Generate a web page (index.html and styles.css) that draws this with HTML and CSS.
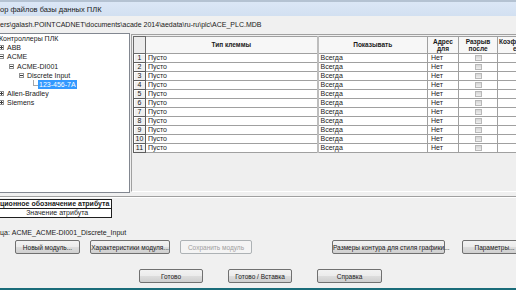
FILE: index.html
```html
<!DOCTYPE html>
<html>
<head>
    <link rel="stylesheet" href="styles.css">
</head>
<body>
    <div class="window">
        <div class="titlebar"><span class="title">ор файлов базы данных ПЛК</span></div>
        <div class="path">ers\galash.POINTCADNET\documents\acade 2014\aedata\ru-ru\plc\ACE_PLC.MDB</div>

        <div class="main">
            <div class="tree">
                <div class="node root">Контроллеры ПЛК</div>
                <div class="node lvl1"><i class="exp plus"></i>ABB</div>
                <div class="node lvl1"><i class="exp minus"></i>ACME</div>
                <div class="node lvl2"><i class="exp minus"></i>ACME-DI001</div>
                <div class="node lvl3"><i class="exp minus"></i>Discrete Input</div>
                <div class="node lvl4"><i class="leaf"></i><span class="selected">123-456-7A</span></div>
                <div class="node lvl1"><i class="exp plus"></i>Allen-Bradley</div>
                <div class="node lvl1"><i class="exp plus"></i>Siemens</div>
            </div>

            <div class="grid">
                <table class="cells">
                    <colgroup>
                        <col class="c-num">
                        <col class="c-type">
                        <col class="c-show">
                        <col class="c-addr">
                        <col class="c-break">
                        <col class="c-coef">
                    </colgroup>
                    <thead>
                        <tr>
                            <th class="corner"></th>
                            <th>Тип клеммы</th>
                            <th class="show">Показывать</th>
                            <th>Адрес<br>для</th>
                            <th>Разрыв<br>после</th>
                            <th class="coef">Коэф<br><span class="coef-2">е</span></th>
                        </tr>
                    </thead>
                    <tbody id="rows"></tbody>
                </table>
            </div>
        </div>

        <div class="sep"></div>

        <table class="attr">
            <tr><th>ционное обозначение атрибута</th></tr>
            <tr><td>Значение атрибута</td></tr>
        </table>

        <div class="unit">ца: ACME_ACME-DI001_Discrete_Input</div>

        <div class="buttons">
            <button class="btn w65">Новый модуль...</button>
            <button class="btn w79">Характеристики модуля...</button>
            <button class="btn w72" disabled>Сохранить модуль</button>
            <button class="btn w112 far">Размеры контура для стиля графики...</button>
            <button class="btn w65 near">Параметры...</button>
        </div>

        <div class="buttons bottom">
            <button class="btn w64">Готово</button>
            <button class="btn w64">Готово / Вставка</button>
            <button class="btn w65">Справка</button>
        </div>

        <div class="taskbar"></div>
    </div>

    <script>
        // строки таблицы клемм
        const rows = document.getElementById('rows');
        for (let i = 1; i <= 11; i++) {
            const tr = document.createElement('tr');
            tr.innerHTML =
                '<td class="num">' + i + '</td>' +
                '<td>Пусто</td>' +
                '<td class="show">Всегда</td>' +
                '<td class="addr">Нет</td>' +
                '<td class="mid"><span class="chk"></span></td>' +
                '<td></td>';
            rows.appendChild(tr);
        }
    </script>
</body>
</html>
```

FILE: styles.css
```css
body {
    margin: 0;
    width: 516px;
    height: 290px;
    overflow: hidden;
    background: #f0f0f0;
    font-family: "Liberation Sans", Arial, sans-serif;
    font-size: 7px;
    color: #1a1a1a;
}

.window {
    width: 516px;
    height: 290px;
    display: flex;
    flex-direction: column;
}

.titlebar {
    height: 16px;
    box-sizing: border-box;
    padding-top: 2px;
    display: flex;
    align-items: center;
    background: linear-gradient(#b4c2d2 0, #b4c2d2 2px, #dbe7f6 2px, #d2e0f1 100%);
    font-size: 7.5px;
}

.path {
    height: 17px;
    display: flex;
    align-items: center;
    white-space: nowrap;
}

.main {
    display: flex;
    height: 161px;
}

.tree {
    width: 130px;
    height: 160px;
    flex-shrink: 0;
    box-sizing: border-box;
    border: 1px solid #828790;
    border-left: none;
    background: #fff;
    overflow: hidden;
}

.node {
    height: 9.2px;
    line-height: 9px;
    display: flex;
    align-items: center;
    white-space: nowrap;
}

.root { margin-left: -1px; }
.lvl2 { padding-left: 10px; }
.lvl3 { padding-left: 20px; }
.lvl4 { padding-left: 32px; }

.exp {
    position: relative;
    width: 5px;
    height: 5px;
    box-sizing: border-box;
    border: 1px solid #8e8f8f;
    background: #fff;
    margin-left: -1px;
    margin-right: 3px;
}

.exp::before {
    content: '';
    position: absolute;
    left: 0;
    top: 1px;
    width: 3px;
    height: 1px;
    background: #3b3b3b;
}

.exp.plus::after {
    content: '';
    position: absolute;
    left: 1px;
    top: 0;
    width: 1px;
    height: 3px;
    background: #3b3b3b;
}

.leaf {
    width: 5px;
    height: 6px;
    margin-top: -4px;
    box-sizing: border-box;
    border-left: 1px solid #a8a8a8;
    border-bottom: 1px solid #a8a8a8;
    margin-left: 1px;
}

.selected {
    background: #3399ff;
    color: #fff;
    padding: 0 1px;
    line-height: 9px;
}

.grid {
    flex: 1;
    height: 158px;
    margin: 1px 0 0 1px;
    box-sizing: border-box;
    border-left: 1px solid #a0a0a0;
    border-top: 1px solid #a0a0a0;
    border-bottom: 1px solid #fff;
    background: #efefef;
    padding: 1px 0 0 1px;
    overflow: hidden;
}

.cells {
    border-collapse: collapse;
    table-layout: fixed;
    width: 420px;
    background: #fff;
}

.c-num { width: 12px; }
.c-type { width: 172px; }
.c-show { width: 110px; }
.c-addr { width: 31px; }
.c-break { width: 39px; }
.c-coef { width: 56px; }

.cells th {
    height: 16px;
    padding: 0;
    font-weight: bold;
    font-size: 6.5px;
    line-height: 7.5px;
    background: #f7f7f7;
    border: 1px solid #a0a0a0;
    text-align: center;
}

.cells th.corner {
    border: 1px solid #6a6a6a;
    background: #ececec;
}

.cells th.coef {
    text-align: left;
    padding-left: 1px;
}

.coef-2 { padding-left: 14px; }

.cells td {
    height: 8px;
    padding: 0 0 0 2px;
    line-height: 8px;
    border: 1px solid #a0a0a0;
    white-space: nowrap;
    overflow: hidden;
}

.cells .show { border-left: 2px solid #bdbdbd; }

.cells td.addr { padding-left: 3px; }

.cells td.num {
    padding: 0;
    text-align: center;
    border: 1px solid #5e5e5e;
    background: #efefef;
    box-shadow: inset 1px 1px 0 #fff;
}

.cells td.mid {
    padding: 0;
    text-align: center;
}

.chk {
    display: inline-block;
    width: 7px;
    height: 6px;
    box-sizing: border-box;
    border: 1px solid #b9b9b9;
    background: linear-gradient(#d6d6d6, #efefef);
    vertical-align: middle;
}

.sep {
    margin-top: 2px;
    height: 1px;
    background: #a0a0a0;
    border-bottom: 1px solid #fff;
}

.attr {
    margin: 1px 0 0 -1px;
    width: 113px;
    border-collapse: collapse;
    background: #fff;
}

.attr th,
.attr td {
    height: 8px;
    padding: 0;
    line-height: 8px;
    border: 1px solid #1e1e1e;
    white-space: nowrap;
    color: #1a1a1a;
}

.attr th {
    text-align: right;
    padding-right: 2px;
}

.attr td {
    text-align: center;
    padding-left: 3px;
}

.unit {
    margin-top: 10px;
    height: 10px;
    line-height: 10px;
}

.buttons {
    display: flex;
    margin-top: 2px;
    padding-left: 15px;
    gap: 10px;
}

.buttons.bottom {
    margin-top: 15px;
    padding-left: 139px;
    gap: 25px;
}

.btn {
    flex-shrink: 0;
    height: 14px;
    padding: 0;
    border: 1px solid #707070;
    border-radius: 2px;
    background: linear-gradient(#f2f2f2 0%, #ebebeb 50%, #dddddd 51%, #cfcfcf 100%);
    font-family: "Liberation Sans", Arial, sans-serif;
    font-size: 6.5px;
    color: #1a1a1a;
    white-space: nowrap;
}

.btn:disabled {
    border-color: #adb2b5;
    background: #f4f4f4;
    color: #a0a0a0;
}

.w64 { width: 64px; }
.w65 { width: 65px; }
.w72 { width: 72px; }
.w79 { width: 80px; }
.w112 { width: 113px; }
.far { margin-left: 70px; }
.near { margin-left: 7px; }

.taskbar {
    margin-top: 5px;
    height: 2px;
    background: #1a6c79;
}
```
